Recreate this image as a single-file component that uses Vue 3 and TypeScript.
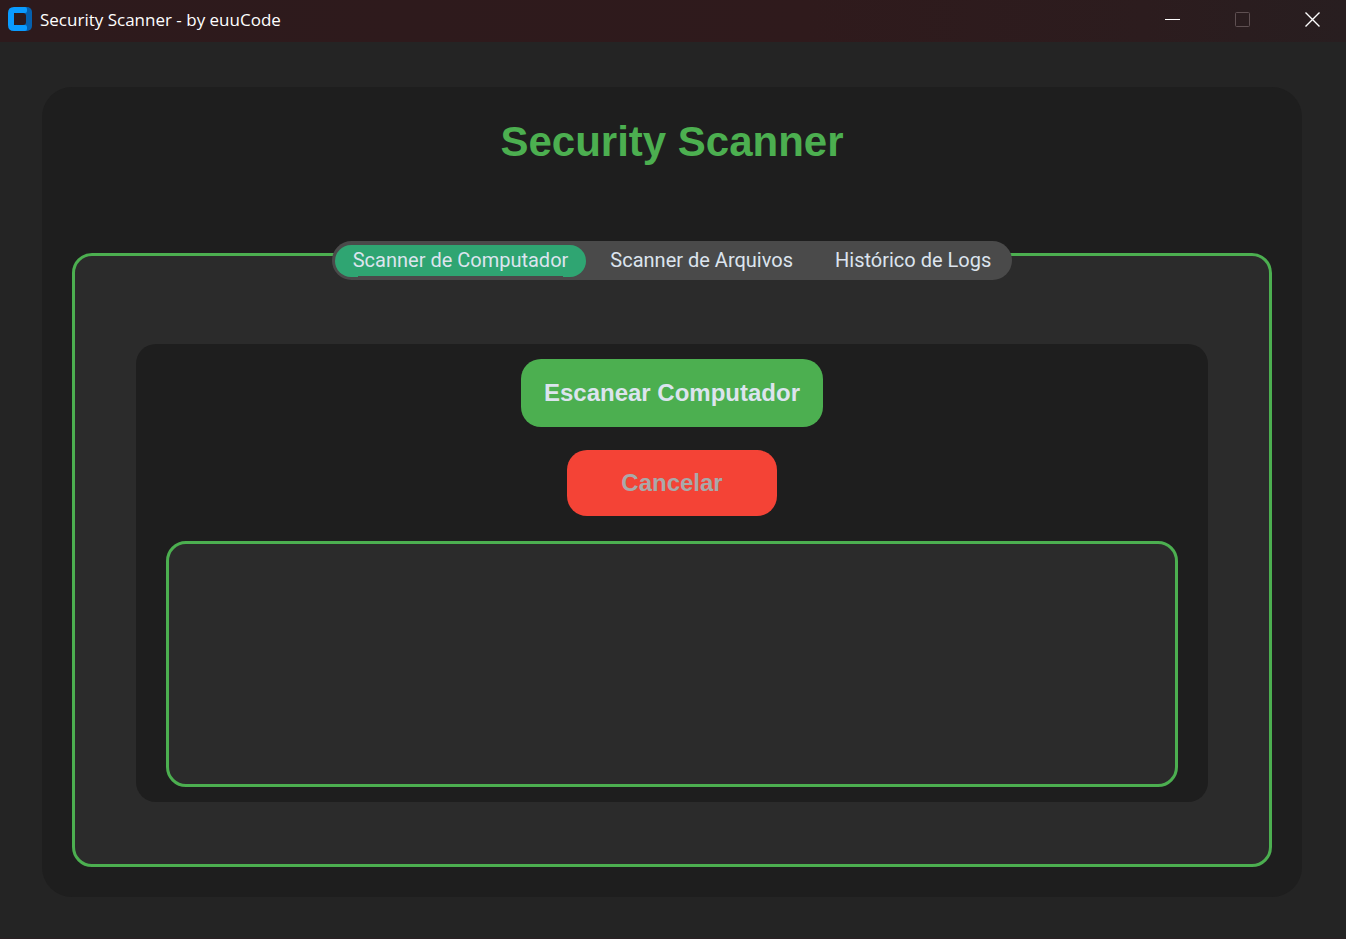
<script setup lang="ts">
import { ref } from 'vue'

const tabs: string[] = ['Scanner de Computador', 'Scanner de Arquivos', 'Histórico de Logs']
const active = ref<number>(0)
const output = ref<string>('')
</script>

<template>
  <div class="window">
    <header class="titlebar">
      <svg class="logo" viewBox="0 0 24 24" aria-hidden="true">
        <rect x="8" width="16" height="24" rx="5" fill="#0560ae" />
        <path fill="#0a9bff" d="M6 0H17Q19 0 19 2V4Q19 6 17 6H6V18H17Q19 18 19 20V22Q19 24 17 24H6Q0 24 0 18V6Q0 0 6 0Z" />
        <rect x="6" y="6" width="12" height="12" rx="3" fill="#2d1a1c" />
      </svg>
      <span class="caption">Security Scanner - by euuCode</span>
      <div class="controls">
        <button type="button" aria-label="Minimizar">
          <svg viewBox="0 0 15 15"><path d="M0 7.5H15" stroke="#fff" /></svg>
        </button>
        <button type="button" aria-label="Maximizar" disabled>
          <svg viewBox="0 0 15 15"><rect x="0.5" y="0.5" width="14" height="14" rx="1" fill="none" stroke="#5f5052" /></svg>
        </button>
        <button type="button" aria-label="Fechar">
          <svg viewBox="0 0 15 15"><path d="M0.5 0.5L14.5 14.5M14.5 0.5L0.5 14.5" stroke="#fff" stroke-width="1.4" /></svg>
        </button>
      </div>
    </header>

    <main class="card">
      <h1>Security Scanner</h1>
      <div class="tabs" role="tablist">
        <button
          v-for="(tab, i) in tabs"
          :key="tab"
          type="button"
          role="tab"
          class="tab"
          :class="{ active: i === active }"
          :aria-selected="i === active"
          @click="active = i"
        >
          {{ tab }}
        </button>
      </div>
      <section class="frame">
        <div class="panel">
          <button type="button" class="action scan">Escanear Computador</button>
          <button type="button" class="action cancel" disabled>Cancelar</button>
          <textarea v-model="output" class="output" aria-label="Resultado" readonly></textarea>
        </div>
      </section>
    </main>
  </div>
</template>

<style>
body {
  margin: 0;
  background: #242424;
}
</style>

<style scoped>
.window {
  box-sizing: border-box;
  min-height: 100vh;
  display: flex;
  flex-direction: column;
  background: #242424;
  border-bottom: 1px solid #2a2023;
}
button {
  border: 0;
  margin: 0;
  padding: 0;
  background: none;
}
.titlebar {
  height: 42px;
  display: flex;
  align-items: flex-start;
  padding-left: 8px;
  background: linear-gradient(90deg, #2d1a1c 0%, #2f1a1c 60%, #2c1c1e 85%, #281e20 100%);
}
.logo {
  width: 24px;
  height: 24px;
  margin-top: 7px;
}
.caption {
  margin-left: 8px;
  font: 17px/40px "Open Sans", "Noto Sans", sans-serif;
  color: #fff;
}
.controls {
  display: flex;
  gap: 3px;
  margin-left: auto;
}
.controls button {
  width: 67px;
  height: 39px;
  display: grid;
  place-items: center;
}
.controls svg {
  width: 15px;
  height: 15px;
}
.card {
  flex: 1;
  display: flex;
  flex-direction: column;
  margin: 45px 44px 41px 42px;
  padding: 30px;
  border-radius: 30px;
  background: #1e1e1e;
}
h1 {
  margin: 0 0 74px;
  font: bold 42px/50px "Liberation Sans", Arial, sans-serif;
  text-align: center;
  color: #4caf50;
}
.tabs {
  z-index: 1;
  align-self: center;
  display: flex;
  gap: 6px;
  box-sizing: border-box;
  height: 39px;
  padding: 4px 3px 3px;
  margin-bottom: -27px;
  border-radius: 20px;
  background: #4a4a4a;
}
.tab {
  padding: 0 18px 2px;
  border-radius: 16px;
  font: 20px/30px Roboto, sans-serif;
  color: #dce4ee;
}
.tab.active {
  background: linear-gradient(#4a4a4a, #4a4a4a) center bottom / calc(100% - 46px) 1px no-repeat, #2fa572;
}
.frame {
  flex: 1;
  display: flex;
  padding: 88px 61px 62px;
  border: 3px solid #4caf50;
  border-radius: 20px;
  background: #2b2b2b;
}
.panel {
  flex: 1;
  display: flex;
  flex-direction: column;
  align-items: center;
  padding: 15px 30px;
  border-radius: 20px;
  background: #1e1e1e;
}
.action {
  border-radius: 20px;
  font: bold 24px/28px "Liberation Sans", Arial, sans-serif;
}
.scan {
  width: 302px;
  height: 68px;
  margin-bottom: 23px;
  background: #4caf50;
  color: #dce4ee;
}
.cancel {
  width: 210px;
  height: 66px;
  margin-bottom: 25px;
  background: #f44336;
  color: #a9a9a9;
}
.output {
  flex: 1;
  box-sizing: border-box;
  width: 100%;
  padding: 16px;
  border: 3px solid #4caf50;
  border-radius: 20px;
  outline: 0;
  resize: none;
  background: #2b2b2b;
  color: #dce4ee;
  font: 20px/24px Roboto, sans-serif;
}
</style>
